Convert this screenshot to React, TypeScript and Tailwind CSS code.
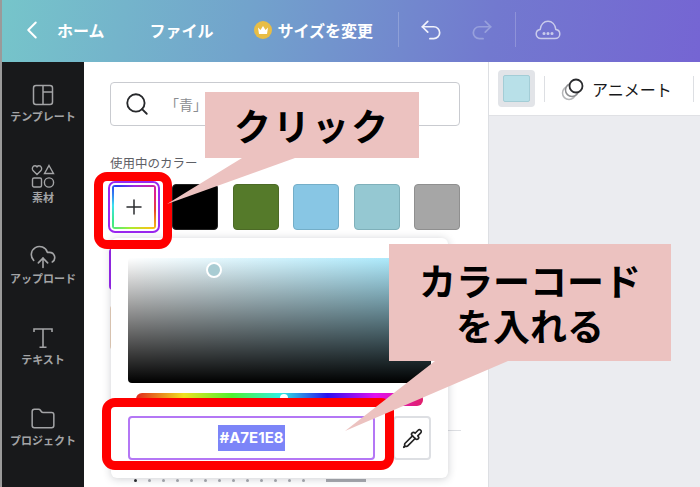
import { ChevronLeft, CloudUpload, Folder, Pipette, Plus, Redo2, Search, Undo2 } from "lucide-react";

const JP = "font-['Noto_Sans_CJK_JP','Noto_Sans',sans-serif]";

function TemplateIcon() {
  return (
    <svg width="22" height="22" viewBox="0 0 22 22" fill="none" stroke="currentColor" strokeWidth="1.5">
      <rect x="1.5" y="1.5" width="19" height="19" rx="2.5" />
      <path d="M11 1.5v19M11 8h9.5" />
    </svg>
  );
}

function ElementsIcon() {
  return (
    <svg width="24" height="24" viewBox="0 0 24 24" fill="none" stroke="currentColor" strokeWidth="1.4">
      <path d="M6 10.5 2 6.6C.4 4.6 1.8 1.8 4 1.8c1 0 1.6.5 2 1.1.4-.6 1-1.1 2-1.1 2.200 0 3.600 2.800 2 4.800z" />
      <path d="M18 1.500l4.500 8h-9z" />
      <rect x="1.500" y="14" width="9" height="9" rx="1.500" />
      <circle cx="18" cy="18.500" r="4.600" />
    </svg>
  );
}

function TextIcon() {
  return (
    <svg width="22" height="22" viewBox="0 0 22 22" fill="none" stroke="currentColor" strokeWidth="1.6">
      <path d="M2 5V2h18v3M11 2v18M7.500 20.200h7" />
    </svg>
  );
}

function CloudDots() {
  return (
    <svg width="26" height="20" viewBox="0 0 26 20" fill="none" stroke="currentColor" strokeWidth="1.500" className="text-[#c9cbeb]">
      <path d="M6 18.500c-2.800 0-4.800-2-4.800-4.600 0-2.400 1.700-4.200 4-4.500C5.800 4.500 9 1.200 13 1.200s7.200 3.300 7.800 8.200c2.300.3 4 2.100 4 4.500 0 2.600-2 4.600-4.800 4.600z" />
      <circle cx="9" cy="13.500" r=".8" fill="currentColor" />
      <circle cx="13" cy="13.500" r=".8" fill="currentColor" />
      <circle cx="17" cy="13.500" r=".8" fill="currentColor" />
    </svg>
  );
}

function AnimateIcon() {
  return (
    <svg width="24" height="24" viewBox="0 0 24 24" fill="none">
      <circle cx="8" cy="16" r="6.500" stroke="#b5b6b8" strokeWidth="1.500" />
      <circle cx="11" cy="13" r="6.500" fill="#fff" stroke="#8c8d90" strokeWidth="1.500" />
      <circle cx="15" cy="9" r="6.500" fill="#fff" stroke="#2a2b2e" strokeWidth="1.800" />
    </svg>
  );
}

function RailItem({ icon, label }: { icon: React.ReactNode; label: string }) {
  return (
    <div className="flex h-[81px] flex-col items-center justify-end pb-[20px] text-[#a3a4a6]">
      <div className="mb-[1px] flex h-[26px] items-center">{icon}</div>
      <span className="whitespace-nowrap text-[11px] leading-[14px] font-bold">{label}</span>
    </div>
  );
}

function Swatch({ className }: { className: string }) {
  return <div className={`size-[46px] rounded-[4px] border ${className}`} />;
}

export default function App() {
  return (
    <div className={`relative h-[487px] w-[700px] overflow-hidden border-l-2 border-[#9a9a9a] bg-[#ebecf0] ${JP}`}>
      {/* top bar */}
      <header className="flex h-[62px] items-center bg-[linear-gradient(100deg,#76c5ca_0%,#72a3cc_35%,#7279cf_70%,#7565d3_100%)] pb-[3px] pl-[15px] font-bold text-white">
        <ChevronLeft size={30} strokeWidth={1.600} />
        <span className="ml-[10px] text-[16px]">ホーム</span>
        <span className="ml-[45px] text-[16px]">ファイル</span>
        <span className="ml-[40px] grid size-[18px] place-items-center rounded-full bg-[#e8bd45]">
          <svg width="12" height="10" viewBox="0 0 12 10" fill="#fff">
            <path d="M1 2.500 3.500 5 6 1l2.500 4L11 2.500 10 9H2z" />
          </svg>
        </span>
        <span className="ml-[6px] text-[16px] whitespace-nowrap">サイズを変更</span>
        <span className="ml-[25px] h-[35px] w-px bg-white/20" />
        <Undo2 size={26} strokeWidth={1.600} className="ml-[19px] text-[#f0f2fb]" />
        <Redo2 size={26} strokeWidth={1.600} className="ml-[25px] text-[#97a0dc]" />
        <span className="ml-[20px] h-[35px] w-px bg-white/20" />
        <span className="ml-[19px]"><CloudDots /></span>
      </header>

      <div className="flex h-[425px]">
        {/* left rail */}
        <aside className="flex w-[82px] shrink-0 flex-col bg-[#18191b]">
          <RailItem icon={<TemplateIcon />} label="テンプレート" />
          <RailItem icon={<ElementsIcon />} label="素材" />
          <RailItem icon={<CloudUpload size={28} strokeWidth={1.400} />} label="アップロード" />
          <RailItem icon={<TextIcon />} label="テキスト" />
          <RailItem icon={<Folder size={26} strokeWidth={1.400} />} label="プロジェクト" />
        </aside>

        {/* side panel */}
        <section className="relative w-[405px] shrink-0 border-r border-[#dddfe3] bg-white px-[26px] pt-[20px]">
          <div className="flex h-[44px] w-[350px] items-center rounded-[4px] border border-[#c9cbd0] pl-[13px] text-[#8a8c90]">
            <Search size={26} strokeWidth={1.700} className="text-[#26282b]" />
            <span className="ml-[15px] text-[14px]">「青」</span>
          </div>
          <p className="mt-[28px] text-[12.500px] leading-[18px] text-[#5e6066]">使用中のカラー</p>
          <div className="mt-[9px] flex items-center">
            <div className="grid size-[52px] place-items-center rounded-[7px] border-2 border-[#9a27f0] p-[2px] -ml-[2px]">
              <div className="rounded-[3px] bg-[conic-gradient(#9a2be2,#e0208c_60deg,#e8442c_100deg,#f5c518_140deg,#a8ec30_190deg,#3cea8c_235deg,#3ce0f0_275deg,#2a3cf0_320deg,#9a2be2)] p-[2px]">
                <div className="grid size-[40px] place-items-center bg-white">
                  <Plus size={24} strokeWidth={1.500} className="text-[#2a2b2e]" />
                </div>
              </div>
            </div>
            <div className="ml-[12px] flex gap-[14.500px]">
              <Swatch className="border-[#222] bg-black" />
              <Swatch className="border-[#4c6a26] bg-[#557a2a]" />
              <Swatch className="border-[#74aec8] bg-[#88c6e4]" />
              <Swatch className="border-[#7fb0ba] bg-[#95c8d2]" />
              <Swatch className="border-[#8f8f8f] bg-[#a6a6a6]" />
            </div>
          </div>
          <div className="mt-[15px] h-[42px] w-[40px] rounded-[4px] border-2 border-[#9a27f0] -ml-[1px]" />
          <div className="mt-[15px] h-[45px] w-[40px] rounded-[4px] bg-[#ecd4bd]" />
          <div className="absolute top-[368px] right-[27px] h-px w-[30px] bg-[#dddfe3]" />

          {/* row peeking out under the popover */}
          <div className="absolute top-[417px] left-[50px] flex gap-[11px]">
            <span className="size-[3px] rounded-full bg-[#2a2b2e]" />
            <span className="size-[3px] rounded-full bg-[#a9abb0]" />
            <span className="size-[3px] rounded-full bg-[#a9abb0]" />
            <span className="size-[3px] rounded-full bg-[#a9abb0]" />
            <span className="size-[3px] rounded-full bg-[#a9abb0]" />
            <span className="size-[3px] rounded-full bg-[#a9abb0]" />
            <span className="size-[3px] rounded-full bg-[#a9abb0]" />
            <span className="size-[3px] rounded-full bg-[#a9abb0]" />
            <span className="size-[3px] rounded-full bg-[#a9abb0]" />
            <span className="size-[3px] rounded-full bg-[#a9abb0]" />
            <span className="size-[3px] rounded-full bg-[#a9abb0]" />
            <span className="size-[3px] rounded-full bg-[#a9abb0]" />
            <span className="size-[3px] rounded-full bg-[#a9abb0]" />
            <span className="ml-[10px] h-[3px] w-[40px] bg-[#a9abb0]" />
          </div>

          {/* colour picker popover */}
          <div className="absolute top-[176px] left-[27px] h-[240px] w-[337px] rounded-[6px] bg-white px-[17px] pt-[20px] shadow-[0_1px_8px_rgba(30,35,50,0.22)]">
            <div className="relative h-[125px] w-[303px] rounded-[4px] bg-[linear-gradient(to_top,#000,transparent),linear-gradient(to_right,#fff,#a0e6fb)]">
              <div className="absolute top-[4px] left-[78px] size-[16px] rounded-full border-2 border-white bg-[#a9ccd3]" />
            </div>
            <div className="relative mx-[8px] mt-[10px] h-[13px] w-[287px] rounded-[6px] bg-[linear-gradient(to_right,#e0281c,#f0e020,#50f030,#30f0e0,#2a10f0,#e010f0,#e0206a)]">
              <div className="absolute top-[1px] left-[144px] size-[8px] rounded-full bg-white" />
            </div>
            <div className="mt-[10px] flex items-center gap-[18px]">
              <div className="grid h-[44px] w-[247px] place-items-center rounded-[4px] border-2 border-[#b477f5] bg-white">
                <span className="bg-[#7c85f8] px-[1px] font-['Inter',sans-serif] text-[15px] leading-[26px] font-bold text-white">#A7E1E8</span>
              </div>
              <div className="grid h-[44px] w-[38px] place-items-center rounded-[4px] border-2 border-[#dddfe3]">
                <Pipette size={21} strokeWidth={1.900} className="text-[#222]" />
              </div>
            </div>
          </div>
        </section>

        {/* canvas side */}
        <div className="min-w-0 flex-1">
          <div className="flex h-[54px] items-center border-b border-[#e0e1e5] bg-white pl-[9px]">
            <div className="grid size-[37px] place-items-center rounded-[4px] bg-[#e2e4e8]">
              <div className="size-[27px] rounded-[2px] border border-[#a3cdd6] bg-[#b8e0e8]" />
            </div>
            <span className="ml-[9px] h-[26px] w-px bg-[#dddfe3]" />
            <span className="ml-[16px]"><AnimateIcon /></span>
            <span className="ml-[7px] text-[16px] whitespace-nowrap text-[#17181a]">アニメート</span>
            <span className="ml-[21px] h-[26px] w-px bg-[#dddfe3]" />
          </div>
        </div>
      </div>

      {/* annotation: red frames */}
      <div className="absolute top-[172px] left-[92px] h-[77px] w-[78px] rounded-[13px] border-[9px] border-[#ff0000]" />
      <div className="absolute top-[398px] left-[100px] h-[72px] w-[292px] rounded-[13px] border-[9px] border-[#ff0000]" />

      {/* annotation: callouts */}
      <div className="absolute top-[92px] left-[203px] flex h-[66px] w-[214px] items-center justify-center bg-[#ecc2c0] text-[37px] leading-none font-bold tracking-[2px] text-black">
        クリック
      </div>
      <svg className="absolute top-[157px] left-[165px]" width="130" height="48" viewBox="0 0 130 48">
        <polygon points="0,47 75,1 128,1" fill="#ecc2c0" />
      </svg>
      <div className="absolute top-[244px] left-[387px] flex h-[117px] w-[282px] flex-col items-center justify-center bg-[#ecc2c0] text-[37px] leading-[45px] font-bold text-black">
        <span>カラーコード</span>
        <span>を入れる</span>
      </div>
      <svg className="absolute top-[360px] left-[343px]" width="165" height="72" viewBox="0 0 165 72">
        <polygon points="0,71 90,1 163,1" fill="#ecc2c0" />
      </svg>
    </div>
  );
}
